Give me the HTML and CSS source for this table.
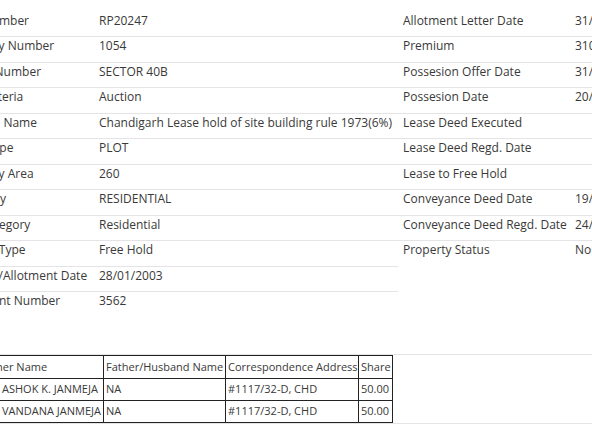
FILE: index.html
```html
<!DOCTYPE html>
<html lang="en">
<head>
<meta charset="utf-8">
<title>Property Details</title>
<link rel="stylesheet" href="styles.css">
</head>
<body>
<div class="page">
  <div class="details">
    <div class="kv kv-left">
      <div class="row"><div class="label">Unit Number</div><div class="value">RP20247</div></div>
      <div class="row"><div class="label">Property Number</div><div class="value">1054</div></div>
      <div class="row"><div class="label">Sector Number</div><div class="value">SECTOR 40B</div></div>
      <div class="row"><div class="label">Sale Criteria</div><div class="value">Auction</div></div>
      <div class="row"><div class="label">Scheme Name</div><div class="value">Chandigarh Lease hold of site building rule 1973(6%)</div></div>
      <div class="row"><div class="label">Land Type</div><div class="value">PLOT</div></div>
      <div class="row"><div class="label">Property Area</div><div class="value">260</div></div>
      <div class="row"><div class="label">Category</div><div class="value">RESIDENTIAL</div></div>
      <div class="row"><div class="label">Sub Category</div><div class="value">Residential</div></div>
      <div class="row"><div class="label">Tenure Type</div><div class="value">Free Hold</div></div>
      <div class="row"><div class="label">Auction/Allotment Date</div><div class="value">28/01/2003</div></div>
      <div class="row"><div class="label">Allotment Number</div><div class="value">3562</div></div>
    </div>
    <div class="kv kv-right">
      <div class="row"><div class="label">Allotment Letter Date</div><div class="value">31/03/2003</div></div>
      <div class="row"><div class="label">Premium</div><div class="value">3100000</div></div>
      <div class="row"><div class="label">Possesion Offer Date</div><div class="value">31/03/2003</div></div>
      <div class="row"><div class="label">Possesion Date</div><div class="value">20/05/2003</div></div>
      <div class="row"><div class="label">Lease Deed Executed</div><div class="value"></div></div>
      <div class="row"><div class="label">Lease Deed Regd. Date</div><div class="value"></div></div>
      <div class="row"><div class="label">Lease to Free Hold</div><div class="value"></div></div>
      <div class="row"><div class="label">Conveyance Deed Date</div><div class="value">19/09/2007</div></div>
      <div class="row"><div class="label">Conveyance Deed Regd. Date</div><div class="value">24/09/2007</div></div>
      <div class="row"><div class="label">Property Status</div><div class="value">Normal</div></div>
    </div>
  </div>

  <div class="owners">
    <table class="owner-table">
      <colgroup>
        <col class="c-name"><col class="c-father"><col class="c-addr"><col class="c-share">
      </colgroup>
      <thead>
        <tr><th>Owner Name</th><th>Father/Husband Name</th><th>Correspondence Address</th><th>Share</th></tr>
      </thead>
      <tbody>
        <tr><td class="name">ASHOK K. JANMEJA</td><td>NA</td><td>#1117/32-D, CHD</td><td>50.00</td></tr>
        <tr><td class="name">VANDANA JANMEJA</td><td>NA</td><td>#1117/32-D, CHD</td><td>50.00</td></tr>
      </tbody>
    </table>
  </div>
</div>
</body>
</html>
```

FILE: styles.css
```css
html, body {
  margin: 0;
  padding: 0;
  overflow: hidden;
  background: #ffffff;
}

body {
  font-family: "Open Sans", "Noto Sans", sans-serif;
  font-size: 12px;
  color: #393939;
}

.page {
  margin-left: -48px;
  padding-top: 10.5px;
  width: 760px;
}

.details {
  display: flex;
  align-items: flex-start;
}

.kv-left {
  width: 446px;
}

.kv-right {
  width: 300px;
}

.row {
  display: flex;
  height: 25.5px;
  box-sizing: border-box;
  border-top: 1px solid #e4e4e6;
}

.row:first-child {
  border-top: none;
}

.label,
.value {
  padding: 1px 4px 0;
  line-height: 16px;
  white-space: nowrap;
}

.row:first-child .label,
.row:first-child .value {
  padding-top: 2px;
}

.kv-left .label {
  width: 143px;
  box-sizing: border-box;
}

.kv-left .value {
  flex: 1;
}

.kv-right .label {
  width: 172px;
  box-sizing: border-box;
  padding-left: 5px;
}

.kv-right .value {
  flex: 1;
  padding-left: 5px;
}

.owners {
  margin-top: 37.5px;
  border-top: 1px solid #e4e4e6;
  border-bottom: 1px solid #e4e4e6;
}

.owner-table {
  margin-left: 24px;
  border-collapse: collapse;
  table-layout: fixed;
  width: 416px;
  font-size: 11px;
}

.c-name { width: 127px; }
.c-father { width: 122px; }
.c-addr { width: 133px; }
.c-share { width: 34px; }

.owner-table th,
.owner-table td {
  border: 1px solid #222222;
  padding: 3px 2px 4px;
  line-height: 15px;
  text-align: left;
  font-weight: normal;
  white-space: nowrap;
  overflow: hidden;
}

.owner-table td {
  padding-top: 2px;
  padding-bottom: 4px;
}

.owner-table td.name {
  padding-left: 25px;
}
```
